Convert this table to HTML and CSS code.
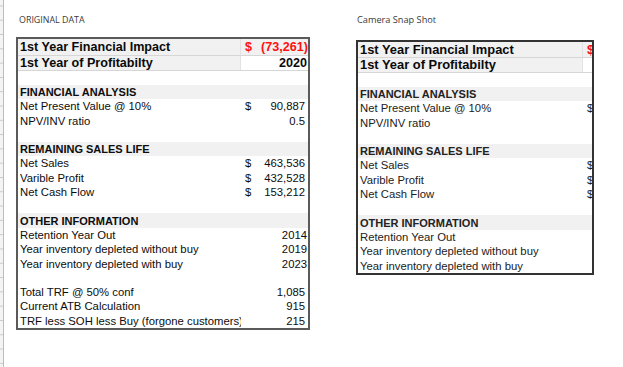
FILE: index.html
```html
<!DOCTYPE html>
<html lang="en">
<head>
<meta charset="utf-8">
<title>Original Data / Camera Snap Shot</title>
<link rel="stylesheet" href="styles.css">
</head>
<body>
<div class="page">
  <div class="gutter"></div>

  <section class="panel panel-orig">
    <h2 class="caption">ORIGINAL DATA</h2>
    <div class="sheet">
      <div class="row r1 shade"><span class="lbl big">1st Year Financial Impact</span><span class="val acct big neg"><span>$</span><span>(73,261)</span></span></div>
      <div class="row r2"><span class="lbl big shade">1st Year of Profitabilty</span><span class="val year big">2020</span></div>
      <div class="row"></div>
      <div class="row shade"><span class="lbl head">FINANCIAL ANALYSIS</span></div>
      <div class="row"><span class="lbl">Net Present Value @ 10%</span><span class="val acct"><span>$</span><span>90,887</span></span></div>
      <div class="row"><span class="lbl">NPV/INV ratio</span><span class="val num">0.5</span></div>
      <div class="row"></div>
      <div class="row shade"><span class="lbl head">REMAINING SALES LIFE</span></div>
      <div class="row"><span class="lbl">Net Sales</span><span class="val acct"><span>$</span><span>463,536</span></span></div>
      <div class="row"><span class="lbl">Varible Profit</span><span class="val acct"><span>$</span><span>432,528</span></span></div>
      <div class="row"><span class="lbl">Net Cash Flow</span><span class="val acct"><span>$</span><span>153,212</span></span></div>
      <div class="row"></div>
      <div class="row shade"><span class="lbl head">OTHER INFORMATION</span></div>
      <div class="row"><span class="lbl">Retention Year Out</span><span class="val year">2014</span></div>
      <div class="row"><span class="lbl">Year inventory depleted without buy</span><span class="val year">2019</span></div>
      <div class="row"><span class="lbl">Year inventory depleted with buy</span><span class="val year">2023</span></div>
      <div class="row"></div>
      <div class="row"><span class="lbl">Total TRF @ 50% conf</span><span class="val num">1,085</span></div>
      <div class="row"><span class="lbl">Current ATB Calculation</span><span class="val num">915</span></div>
      <div class="row"><span class="lbl">TRF less SOH less Buy (forgone customers)</span><span class="val num">215</span></div>
    </div>
  </section>

  <section class="panel panel-snap">
    <h2 class="caption">Camera Snap Shot</h2>
    <div class="sheet">
      <div class="row r1 shade"><span class="lbl big">1st Year Financial Impact</span><span class="val cur big neg">$</span></div>
      <div class="row r2"><span class="lbl big shade">1st Year of Profitabilty</span><span class="val"></span></div>
      <div class="row"></div>
      <div class="row shade"><span class="lbl head">FINANCIAL ANALYSIS</span></div>
      <div class="row"><span class="lbl">Net Present Value @ 10%</span><span class="val cur">$</span></div>
      <div class="row"><span class="lbl">NPV/INV ratio</span><span class="val"></span></div>
      <div class="row"></div>
      <div class="row shade"><span class="lbl head">REMAINING SALES LIFE</span></div>
      <div class="row"><span class="lbl">Net Sales</span><span class="val cur">$</span></div>
      <div class="row"><span class="lbl">Varible Profit</span><span class="val cur">$</span></div>
      <div class="row"><span class="lbl">Net Cash Flow</span><span class="val cur">$</span></div>
      <div class="row"></div>
      <div class="row shade"><span class="lbl head">OTHER INFORMATION</span></div>
      <div class="row"><span class="lbl">Retention Year Out</span><span class="val"></span></div>
      <div class="row"><span class="lbl">Year inventory depleted without buy</span><span class="val"></span></div>
      <div class="row"><span class="lbl">Year inventory depleted with buy</span><span class="val"></span></div>
    </div>
  </section>
</div>
</body>
</html>
```

FILE: styles.css
```css
* { box-sizing: border-box; margin: 0; padding: 0; }
html, body { width: 623px; height: 367px; overflow: hidden; background: #fff; }
body { font-family: "Liberation Sans", Arial, sans-serif; color: #0d0d0d; }

.page { display: flex; align-items: flex-start; height: 367px; }

.gutter {
  width: 4px;
  height: 367px;
  border-right: 1px solid #bdbdbd;
  background-color: #f4f4f4;
  background-image: linear-gradient(to bottom, transparent 13.3px, #c9c9c9 13.3px);
  background-size: 100% 14.3px;
  background-position: 0 6.4px;
}

.panel { display: flex; flex-direction: column; }
.panel-orig { margin-left: 12px; --lbl: 223px; --top: 37px; width: 294px; }
.panel-snap { margin-left: 46px; --lbl: 225px; --top: 40px; width: 238px; }

.caption {
  height: var(--top);
  padding-top: 14px;
  line-height: 12px;
  font-family: "Open Sans", "Noto Sans", sans-serif;
  font-size: 8.9px;
  font-weight: 400;
  color: #3a3a3a;
  padding-left: 3px;
}
.panel-snap .caption { padding-left: 1px; font-size: 9.2px; }

.sheet {
  display: flex;
  flex-direction: column;
  border: 2px solid #5a5a5a;
  overflow: hidden;
  background: #fff;
}
.panel-snap .sheet { border-color: #333; color: #222; }

.row {
  display: flex;
  height: 14.3px;
  align-items: center;
  font-size: 11.3px;
  line-height: 14px;
  white-space: nowrap;
}
.r1 { height: 17px; border-bottom: 1px solid #d6d6d6; }
.r2 { height: 14.5px; border-bottom: 1px solid #d6d6d6; }
.panel-snap .r1 { height: 16px; }

.shade { background: #f1f1f1; }

.lbl {
  flex: 0 0 var(--lbl);
  width: var(--lbl);
  overflow: hidden;
  padding-left: 2px;
  align-self: stretch;
  display: flex;
  align-items: center;
}
.r1 .lbl, .r2 .lbl { border-right: 1px solid #e2e2e2; }
.head { font-weight: 700; font-size: 11px; }
.big { font-size: 12.6px; font-weight: 700; color: #0a0a0a; }
.panel-snap .big { font-size: 12.9px; }

.val { flex: 1 0 auto; min-width: 0; }
.acct { display: flex; justify-content: space-between; padding: 0 3px 0 4px; }
.num { text-align: right; padding-right: 3px; }
.year { text-align: right; padding-right: 1px; }
.neg { color: #ff1010; padding-right: 0; }
.cur { padding-left: 4px; }
```
